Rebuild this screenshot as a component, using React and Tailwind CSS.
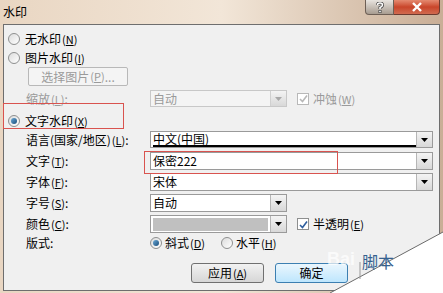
import React from 'react';

const font = "font-['Noto_Sans_CJK_SC','Noto_Sans',sans-serif]";

const Key = ({ k }) => (
  <span className="text-[11px] ml-[1px]">
    (<span className="underline">{k}</span>)
  </span>
);

const Radio = ({ checked }) => (
  <span className="w-[12px] h-[12px] rounded-full border border-[#8e8f8f] bg-gradient-to-br from-[#dcdcdc] to-[#ffffff] flex items-center justify-center shrink-0">
    {checked && <span className="w-[6px] h-[6px] rounded-full bg-gradient-to-br from-[#6aa9d6] to-[#1b4f7c]" />}
  </span>
);

const Check = ({ disabled }) => (
  <span className={`w-[12px] h-[12px] border ${disabled ? 'border-[#b8b8b8]' : 'border-[#8e8f8f]'} bg-white flex items-center justify-center shrink-0`}>
    <svg width="9" height="9" viewBox="0 0 9 9">
      <path d="M1 5 L3.5 7.5 L8 1.5" fill="none" stroke={disabled ? '#b8b8b8' : '#2e5e9e'} strokeWidth="1.6" />
    </svg>
  </span>
);

const Arrow = ({ disabled }) => (
  <span className={`w-[16px] h-full border-l ${disabled ? 'border-[#d0d0d0]' : 'border-[#b6b6b6]'} bg-gradient-to-b from-[#f4f4f4] to-[#d8d8d8] flex items-center justify-center shrink-0`}>
    <svg width="7" height="4" viewBox="0 0 7 4">
      <path d="M0 0 H7 L3.5 4 Z" fill={disabled ? '#a8a8a8' : '#000'} />
    </svg>
  </span>
);

const Combo = ({ w, h = 'h-[18px]', children, disabled }) => (
  <div className={`${w} ${h} border ${disabled ? 'border-[#c8c8c8] bg-[#f4f4f4]' : 'border-[#9a9a9a] bg-white'} flex items-stretch`}>
    <div className={`flex-1 flex items-center pl-[2px] text-[12px] ${disabled ? 'text-[#9a9a9a]' : 'text-black'}`}>{children}</div>
    <Arrow disabled={disabled} />
  </div>
);

const Row = ({ label, k, children, className = '' }) => (
  <div className={`flex items-center ${className}`}>
    <div className="w-[146px] pl-[22px] text-[12px] whitespace-nowrap">
      {label}
      {k && <Key k={k} />}:
    </div>
    {children}
  </div>
);

export default function App() {
  return (
    <div className={`relative w-[443px] h-[293px] overflow-hidden bg-gradient-to-r from-[#e9d6c2] via-[#f2e6d8] to-[#c9ae96] ${font} text-black leading-none`}>
      {/* title bar */}
      <div className="h-[24px] flex">
        <div className="pl-[3px] pt-[6px] text-[12px]">水印</div>
        <div className="ml-auto mr-[3px] flex h-[15px]">
          <div className="w-[29px] rounded-bl-[4px] border border-t-0 border-[#6d5f55] bg-gradient-to-b from-[#e8e4df] to-[#a89c90] flex items-center justify-center">
            <svg width="8" height="11" viewBox="0 0 8 11">
              <path d="M1.5 3 Q1.5 1 4 1 Q6.5 1 6.5 3 Q6.5 4.5 4 5.5 L4 7" fill="none" stroke="#444" strokeWidth="3" />
              <path d="M1.5 3 Q1.5 1 4 1 Q6.5 1 6.5 3 Q6.5 4.5 4 5.5 L4 7" fill="none" stroke="#fff" strokeWidth="1.6" />
              <rect x="2.5" y="8" width="3" height="3" fill="#444" />
              <rect x="3.2" y="8.7" width="1.6" height="1.6" fill="#fff" />
            </svg>
          </div>
          <div className="w-[46px] rounded-br-[4px] border border-l-0 border-t-0 border-[#6d3a2f] bg-gradient-to-b from-[#e48a70] via-[#c9452a] to-[#d06a4f] flex items-center justify-center">
            <svg width="12" height="10" viewBox="0 0 12 10">
              <path d="M2 1 L10 9 M10 1 L2 9" stroke="#fff" strokeWidth="2.4" />
            </svg>
          </div>
        </div>
      </div>

      {/* client area */}
      <div className="ml-[3px] mr-[3px] h-[267px] border border-[#6e6e6e] bg-[#f0f0f0] pt-[4px] text-[12px]">
        <div className="h-[19px] flex items-center gap-[5px] pl-[4px]">
          <Radio />
          <span>无水印<Key k="N" /></span>
        </div>
        <div className="h-[19px] flex items-center gap-[5px] pl-[4px]">
          <Radio />
          <span>图片水印<Key k="I" /></span>
        </div>
        <div className="ml-[24px] w-[100px] h-[19px] border border-[#b8b8b8] rounded-[2px] bg-[#f4f4f4] flex items-center justify-center text-[#9a9a9a]">
          选择图片<Key k="P" />...
        </div>
        <Row label="缩放" k="L" className="mt-[4px] h-[17px] text-[#9a9a9a]">
          <Combo w="w-[137px]" h="h-[17px]" disabled>自动</Combo>
          <div className="ml-[10px] flex items-center gap-[4px] text-[#9a9a9a]">
            <Check disabled />
            <span>冲蚀<Key k="W" /></span>
          </div>
        </Row>
        <div className="mt-[4px] h-[19px] flex items-center gap-[5px] pl-[4px]">
          <Radio checked />
          <span>文字水印<Key k="X" /></span>
        </div>
        <Row label="语言(国家/地区)" k="L" className="mt-[1px]">
          <Combo w="w-[283px]" h="h-[17px]">
            <span className="w-full h-full flex items-center border-b-2 border-black">中文(中国)</span>
          </Combo>
        </Row>
        <Row label="文字" k="T" className="mt-[4px]">
          <Combo w="w-[283px]">保密222</Combo>
        </Row>
        <Row label="字体" k="F" className="mt-[3px]">
          <Combo w="w-[283px]">宋体</Combo>
        </Row>
        <Row label="字号" k="S" className="mt-[3px]">
          <Combo w="w-[137px]">自动</Combo>
        </Row>
        <Row label="颜色" k="C" className="mt-[3px]">
          <Combo w="w-[137px]">
            <span className="w-[115px] h-[13px] bg-[#c0c0c0]" />
          </Combo>
          <div className="ml-[10px] flex items-center gap-[4px]">
            <Check />
            <span>半透明<Key k="E" /></span>
          </div>
        </Row>
        <div className="mt-[1px] h-[18px] flex items-center">
          <div className="w-[146px] pl-[22px]">版式:</div>
          <div className="w-[71px] flex items-center gap-[3px]">
            <Radio checked />
            <span>斜式<Key k="D" /></span>
          </div>
          <div className="flex items-center gap-[3px]">
            <Radio />
            <span>水平<Key k="H" /></span>
          </div>
        </div>
        <div className="mt-[11px] flex gap-[11px] pl-[187px]">
          <div className="w-[73px] h-[20px] border border-[#707070] rounded-[3px] bg-gradient-to-b from-[#f2f2f2] to-[#d6d6d6] flex items-center justify-center">
            应用<Key k="A" />
          </div>
          <div className="w-[73px] h-[20px] border border-[#3c7fb1] rounded-[3px] bg-gradient-to-b from-[#eaf6fd] to-[#bee6fd] flex items-center justify-center">
            确定
          </div>
        </div>
      </div>

      {/* annotation rectangles */}
      <div className="absolute left-[3px] top-[103px] w-[121px] h-[26px] border border-[#d9534f]" />
      <div className="absolute left-[144px] top-[151px] w-[194px] h-[23px] border border-[#d9534f]" />

      {/* page curl */}
      <svg className="absolute left-0 top-0" width="443" height="293" viewBox="0 0 443 293">
        <polygon points="330,293 443,232 443,293" fill="#ffffff" />
        <path d="M330 293 L443 232" stroke="#6a6a6a" strokeWidth="1" fill="none" />
        <path d="M360 262 L360 279" stroke="#9a9a9a" strokeWidth="1" fill="none" />
      </svg>
      <div className="absolute left-[327px] top-[250px] text-[18px] text-white/70 font-['Liberation_Sans',sans-serif] font-bold">Bai</div>
      <div className="absolute left-[362px] top-[253px] text-[16px] text-[#35618f]">脚本</div>
    </div>
  );
}
